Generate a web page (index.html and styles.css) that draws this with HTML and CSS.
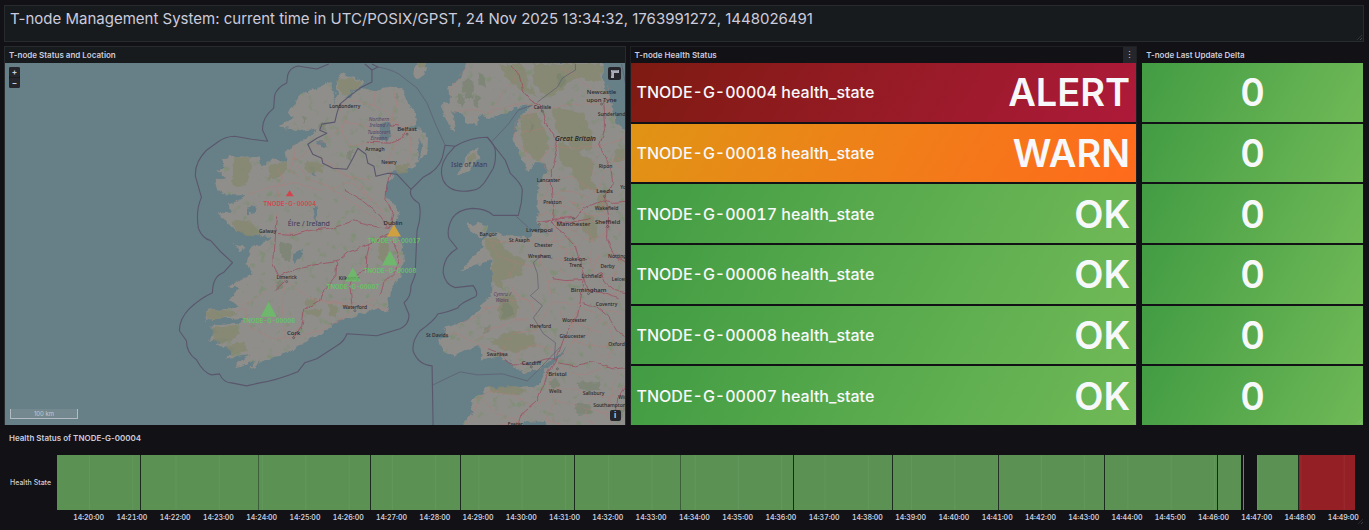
FILE: index.html
```html
<!DOCTYPE html>
<html lang="en">
<head>
    <meta charset="UTF-8">
    <meta name="viewport" content="width=device-width, initial-scale=1.0">
    <title>T-node Management System</title>
    <link rel="stylesheet" href="styles.css">
</head>
<body>
    <header class="banner resizable">
        <h1>T-node Management System: current time in UTC/POSIX/GPST, 24 Nov 2025 13:34:32, 1763991272, 1448026491</h1>
    </header>

    <main class="panels">
        <section class="panel map-panel">
            <h2 class="panel-title">T-node Status and Location</h2>
            <div class="map">
                <svg class="map-canvas" viewBox="5 63 620 361" preserveAspectRatio="xMidYMid slice" role="img" aria-label="Map of T-nodes">
                    <defs>
                        <filter id="rough" x="0" y="0" width="100%" height="100%">
                            <feTurbulence type="fractalNoise" baseFrequency="0.14" numOctaves="3" seed="4"/>
                            <feDisplacementMap in="SourceGraphic" scale="7" xChannelSelector="R" yChannelSelector="G"/>
                        </filter>
                        <!-- coast plus scattered green patches -->
                        <filter id="terrain" x="0" y="0" width="100%" height="100%" color-interpolation-filters="sRGB">
                            <feTurbulence type="fractalNoise" baseFrequency="0.14" numOctaves="3" seed="4"/>
                            <feDisplacementMap in="SourceGraphic" scale="7" xChannelSelector="R" yChannelSelector="G" result="coast"/>
                            <feTurbulence type="fractalNoise" baseFrequency="0.12" numOctaves="4" seed="21"/>
                            <feColorMatrix type="matrix" values="0 0 0 0 0.51  0 0 0 0 0.56  0 0 0 0 0.47  6 0 0 0 -3.7"/>
                            <feComposite in2="coast" operator="in" result="patches"/>
                            <feMerge>
                                <feMergeNode in="coast"/>
                                <feMergeNode in="patches"/>
                            </feMerge>
                        </filter>
                        <filter id="bend" x="0" y="0" width="100%" height="100%">
                            <feTurbulence type="fractalNoise" baseFrequency="0.1" numOctaves="2" seed="9"/>
                            <feDisplacementMap in="SourceGraphic" scale="5" xChannelSelector="R" yChannelSelector="G"/>
                        </filter>
                    </defs>

                    <!-- land -->
                    <g class="land" filter="url(#terrain)">
                        <path d="M343 73L355 78L364 84L350 93L343 98L350 97L360 88L375 90L395 87L403 92L407 103L417 115L418 122L408 129L421 128L428 138L427 153L419 160L422 147L420 138L416 150L418 162L410 168L402 170L389 172L395 178L387 181L385 193L392 203L400 214L393 225L398 233L402 247L404 260L400 277L390 290L388 302L389 312L377 307L363 313L350 317L333 322L327 330L310 338L300 345L287 353L270 358L248 369L257 360L233 367L250 353L225 358L236 348L217 345L230 337L207 339L220 330L209 325L237 323L247 317L205 320L208 310L240 307L230 298L240 287L228 286L253 273L247 263L250 250L272 237L237 231L225 220L218 213L232 212L230 203L248 195L223 195L215 180L226 178L218 170L226 168L222 158L238 156L260 157L262 168L270 160L287 162L285 153L293 145L310 137L317 128L300 131L280 127L292 118L288 112L297 103L300 95L317 88L330 82L335 93L333 104L338 94L337 85Z"/>
                        <path d="M467 62L460 78L448 88L450 103L442 102L442 112L450 128L455 130L452 112L462 113L467 123L477 127L478 115L490 118L507 113L515 107L532 105L522 113L512 138L518 153L528 172L533 163L547 163L543 177L538 183L537 210L537 223L547 234L533 230L530 237L500 234L492 231L480 242L483 247L460 270L470 267L490 260L492 277L492 290L480 308L463 322L443 327L449 337L438 338L440 346L453 357L463 350L480 345L482 360L500 355L510 363L523 372L537 370L553 357L567 345L557 360L543 372L538 385L517 387L483 387L483 393L470 400L472 412L462 424L462 430L520 430L524 420L545 421L552 430L630 430L630 134L615 123L613 110L603 82L601 62Z"/>
                        <path d="M468 224L478 222L488 225L486 233L480 237L470 230Z"/>
                        <path d="M413 73L417 62L426 62L425 75L418 79Z"/>
                        <path d="M457 176L462 167L468 153L477 147L479 157L470 170Z"/>
                        <path d="M234 243L246 248L240 251Z"/>
                    </g>

                    <!-- lakes -->
                    <g class="lake" filter="url(#rough)">
                        <path d="M381 124L390 122L392 134L388 142L380 139Z"/>
                        <path d="M316 139L325 139L327 148L321 149Z"/>
                        <path d="M311 166L315 167L315 176L311 174Z"/>
                        <path d="M314 205L318 208L319 222L315 218Z"/>
                        <path d="M293 253L303 248L302 256L295 264Z"/>
                        <path d="M248 207L257 205L253 215L248 213Z"/>
                    </g>

                    <!-- moorland and woods -->
                    <g class="moor" filter="url(#rough)">
                        <path d="M337 82L348 77L362 84L350 94L342 96Z"/>
                        <path d="M234 157L252 157L251 172L246 185L233 186L232 172Z"/>
                        <path d="M269 166L286 161L289 168L277 178L268 180Z"/>
                        <path d="M234 219L250 221L262 233L248 236L236 230Z"/>
                        <path d="M305 161L323 164L324 172L308 173Z"/>
                        <path d="M207 311L225 309L238 313L222 319L207 319Z"/>
                        <path d="M212 327L238 325L240 334L222 343L215 340Z"/>
                        <path d="M228 345L245 340L247 350L233 354Z"/>
                        <path d="M379 239L388 235L390 250L382 262L378 258Z"/>
                        <path d="M305 299L317 298L316 304L305 304Z"/>
                        <path d="M329 304L337 305L336 316L329 314Z"/>
                        <path d="M306 309L323 308L321 314L307 315Z"/>
                        <path d="M395 166L410 162L408 172L396 174Z"/>
                        <path d="M500 64L524 64L528 88L538 96L520 90L508 80Z"/>
                        <path d="M532 64L602 64L600 82L578 78L560 90L545 97L533 84Z"/>
                        <path d="M521 116L536 112L545 128L548 148L538 162L524 150L520 134Z"/>
                        <path d="M552 107L582 112L590 128L592 147L577 153L568 143L556 131Z"/>
                        <path d="M559 140L578 152L594 162L590 180L598 190L580 189L572 170L560 164Z"/>
                        <path d="M597 196L606 192L606 208L596 212Z"/>
                        <path d="M583 212L594 216L598 235L589 241L583 230Z"/>
                        <path d="M482 238L498 238L510 254L526 260L520 275L502 280L503 290L492 280L492 258Z"/>
                        <path d="M497 298L510 290L520 306L515 318L500 320Z"/>
                        <path d="M488 340L512 331L535 336L535 346L512 352L500 348Z"/>
                        <path d="M488 386L515 385L527 391L510 394L490 390Z"/>
                        <path d="M614 150L625 148L625 160L614 161Z"/>
                        <path d="M417 62L426 62L424 68L417 67Z"/>
                        <path d="M469 156L475 152L475 160L468 165Z"/>
                    </g>
                    <g class="wood" filter="url(#rough)">
                        <path d="M462 82L468 78L474 84L472 98L464 98Z"/>
                        <path d="M478 72L484 76L486 88L480 86Z"/>
                        <path d="M460 93L465 100L462 108L457 102Z"/>
                        <path d="M474 94L480 98L478 108L472 102Z"/>
                        <path d="M280 241L292 244L289 260L282 258Z"/>
                        <path d="M500 300L512 304L514 314L503 318Z"/>
                        <path d="M484 327L491 325L490 331L484 333Z"/>
                        <path d="M318 124L326 122L326 130L320 130Z"/>
                        <path d="M346 152L354 148L352 160L347 158Z"/>
                        <path d="M302 116L306 118L303 124Z"/>
                        <path d="M396 92L399 96L397 102Z"/>
                        <path d="M548 381L556 378L560 386L552 388Z"/>
                        <path d="M576 382L598 380L600 390L580 388Z"/>
                        <path d="M575 404L588 402L592 412L578 414Z"/>
                        <path d="M614 408L624 406L622 418L612 418Z"/>
                        <path d="M276 282L283 280L282 288L277 288Z"/>
                        <path d="M530 120L534 128L530 134Z"/>
                        <path d="M556 76L564 74L566 84L558 86Z"/>
                    </g>

                    <!-- minor roads -->
                    <g class="road" filter="url(#bend)">
                        <path d="M248 195L270 187L297 183L320 190L352 183L378 205L389 224"/>
                        <path d="M279 168L282 178L278 190L277 216"/>
                        <path d="M294 155L290 170L300 178M294 145L295 160L310 150L325 140L347 122L375 130L400 138"/>
                        <path d="M345 120L342 134L352 146L372 142L395 142"/>
                        <path d="M347 98L340 110L347 122M375 90L374 104L350 100M374 104L392 118L407 130"/>
                        <path d="M407 130L395 145L388 160L390 172M407 130L412 145L408 160M395 90L397 105L390 122L404 128L416 120"/>
                        <path d="M297 165L310 180L330 186L350 200L372 215L389 228"/>
                        <path d="M277 235L292 233L310 231M328 165L345 175L370 180M320 158L332 165L360 183L372 203"/>
                        <path d="M285 280L282 300L285 335L292 337M240 307L252 300L270 287L285 280L310 297L325 300L370 305L389 311"/>
                        <path d="M248 324L262 333L276 338L294 337L320 330L345 316L355 308L375 297"/>
                        <path d="M295 336L300 325M318 300L340 303L355 308M236 310L248 309L244 320"/>
                        <path d="M392 225L398 245L401 262L396 275L383 285M372 245L366 265L350 272"/>
                        <path d="M467 66L455 82L450 95M453 112L470 110L490 112L515 104L538 105M490 112L500 98L518 72"/>
                        <path d="M538 105L515 122L514 138L525 150L530 158M542 108L525 118M549 126L535 130L520 132M542 108L570 105L600 104"/>
                        <path d="M600 104L610 112L606 84M600 104L590 88L575 76L560 68M551 146L540 160L550 172M551 146L575 148L600 145M600 145L620 140L625 138"/>
                        <path d="M610 155L620 160L625 158M605 165L612 160L622 168M604 170L600 185L590 195"/>
                        <path d="M545 180L570 175L585 186L603 195M550 196L562 190L575 192L590 198M553 208L560 196L572 202L585 205"/>
                        <path d="M537 200L550 205L562 198M538 215L548 212L556 218L570 216L585 222L605 222"/>
                        <path d="M545 232L560 226L575 230L590 222M533 236L548 242L560 240L575 234L590 240L607 230"/>
                        <path d="M600 196L604 210L612 224L622 232M604 198L618 204L625 200M608 226L600 240L610 252L606 268"/>
                        <path d="M490 240L510 242L530 240L540 248L540 262L548 280L552 300L540 322L535 330"/>
                        <path d="M488 242L500 256L515 262L530 265L540 262M515 262L508 278L515 294L528 300L540 322"/>
                        <path d="M492 290L505 300L520 298L538 302M482 308L498 306L505 300M462 322L480 315L492 304M444 334L460 335L475 342L488 348"/>
                        <path d="M475 342L485 330L500 325L515 320L528 318M500 358L505 342L515 332L535 330M515 362L520 348L538 344L555 350"/>
                        <path d="M562 345L570 330L575 318L577 300M552 300L565 303L580 302M548 280L565 282L585 278"/>
                        <path d="M555 258L570 262L580 268M560 244L572 256L590 258L606 268M585 222L592 240L590 258L594 275"/>
                        <path d="M600 255L592 270L602 285L615 290M615 250L620 262L612 275L622 285M580 292L590 288L606 296L620 294"/>
                        <path d="M580 305L572 320L575 340M582 306L600 315L610 330L615 345L606 360M600 318L585 335L575 340"/>
                        <path d="M575 340L560 358M575 340L595 346L612 345L625 340M557 364L575 375L590 372L605 366L617 368"/>
                        <path d="M557 364L548 385L555 400L545 418M555 386L575 388L593 396L610 396L625 384M593 396L585 412L592 424"/>
                        <path d="M555 400L575 404L593 410L612 412L625 406M518 420L530 405L546 398L555 386M518 420L495 412L478 396L490 390L515 395L530 405"/>
                        <path d="M518 420L498 424M478 396L475 410L466 422M545 418L562 424M617 368L614 384L610 396M610 396L606 412L612 424"/>
                        <path d="M595 175L588 165L600 152M570 200L582 212L594 216L606 212M560 216L552 232L545 240"/>
                        <path d="M540 200L548 190L545 180M560 205L575 210L584 200M543 226L556 232L552 244L566 250L580 244M566 250L560 270L572 276"/>
                        <path d="M594 276L606 278L618 272M600 300L606 310L620 312M560 310L566 322L585 326L600 332M590 340L598 356L612 352"/>
                    </g>

                    <!-- motorways -->
                    <g class="motorway" filter="url(#bend)">
                        <path d="M277 216L275 232L273 262L280 276L303 266L337 261L348 252L370 243L390 234"/>
                        <path d="M278 234L295 235L310 230L335 227L353 220L375 226L389 228"/>
                        <path d="M286 281L276 290M337 261L336 275L322 292L320 300L305 309L302 325L294 337"/>
                        <path d="M370 243L367 255L366 270L352 276L350 285L352 305"/>
                        <path d="M389 228L393 213L386 200L387 185L390 172M389 228L380 215L362 200L345 190"/>
                        <path d="M392 240L399 255L396 270L384 282L380 296"/>
                        <path d="M368 142L390 143L402 138L407 130M388 124L398 126"/>
                        <path d="M510 64L519 75L522 90L530 100L540 106L545 122L553 135L557 150L551 170L551 190L553 206L552 224L562 232L575 246L580 262L584 277L580 300L577 315L565 333L557 356L545 376L538 398L522 412L517 424"/>
                        <path d="M603 100L605 125L599 145L610 166L612 182L605 196L608 215L607 238L613 255L625 262"/>
                        <path d="M545 222L560 218L575 217L583 208L602 200L612 203L625 202"/>
                        <path d="M538 222L550 220L570 222L590 218M552 278L565 280L582 279M584 277L588 290L600 292L618 298M582 302L596 306L608 316L616 330L625 336"/>
                        <path d="M488 348L500 352L508 363L530 363L547 358L557 358M557 362L575 365L592 361L612 368L625 367"/>
                        <path d="M625 385L616 398L615 410M594 276L600 272L605 282L615 290L625 292"/>
                    </g>

                    <!-- borders -->
                    <g class="border">
                        <path d="M329 64L317 69L298 66Q290 68 288 75L287 83Q278 87 275 95L274 108Q262 118 263 130L268 141L252 139L235 136Q226 136 218 142L207 150Q195 162 196 176L202 197Q196 210 199 228Q203 238 211 240L222 252L233 262L224 272Q213 276 213 292Q200 298 190 308Q180 318 180 330L187 340Q187 352 197 359Q204 372 212 374L220 373Q224 382 232 382L247 385L260 382Q276 380 298 371L305 362L317 358L337 345Q345 340 347 333L377 335L400 328Q409 324 409 314L404 302Q411 297 411 285L415 275L417 230Q422 215 419 203Q408 196 411 189L423 177Q438 170 442 158L445 145"/>
                        <path d="M445 145L455 146Q470 137 487 137Q494 144 495 150Q496 160 493 168L487 178Q480 190 472 190Q450 194 443 180Q438 168 447 155L455 146"/>
                        <path d="M487 137L505 160L510 173Q522 184 522 190L521 202L518 215L493 215Q486 208 472 208Q458 209 452 218Q446 230 449 238L457 248Q443 256 443 272Q445 284 455 287L473 285Q480 295 473 297Q458 304 458 307Q446 312 438 313Q434 320 420 330Q412 340 413 350Q418 364 432 365L433 424"/>
                        <path d="M365 64L372 70L378 67L372 64M372 70L372 82L360 88L346 99L340 104Q337 112 335 122L322 124L320 130L327 133L317 138L308 144L313 154L322 158L323 163L333 168L347 169L353 158L358 148L366 154L368 163L374 166L376 176L388 173L397 174L411 189"/>
                    </g>
                    <g class="border border-thin">
                        <path d="M378 67Q396 70 404 78L417 88L427 103L435 123L445 145M492 141L508 124L518 110L532 105M537 102L557 87L562 78L575 70L575 64"/>
                        <path d="M433 384L460 371L477 374L502 373L527 380L537 370L560 346M516 216L528 227M621 64L625 84"/>
                        <path d="M552 258L541 255L533 262L537 273L538 288L530 295L542 305L533 317L543 333L555 342L554 358"/>
                    </g>

                    <!-- place names -->
                    <g class="place">
                        <text x="345" y="108">Londonderry</text>
                        <text x="375" y="151">Armagh</text>
                        <text x="389" y="164">Newry</text>
                        <text x="268" y="233">Galway</text>
                        <text x="287" y="278">Limerick</text>
                        <text x="349" y="279">Kilkenny</text>
                        <text x="355" y="308">Waterford</text>
                        <text x="542" y="109">Carlisle</text>
                        <text x="611" y="116">Sunderland</text>
                        <text x="605" y="168">Ripon</text>
                        <text x="548" y="182">Lancaster</text>
                        <text x="552" y="204">Preston</text>
                        <text x="606" y="210">Wakefield</text>
                        <text x="625" y="189">York</text>
                        <text x="488" y="236">Bangor</text>
                        <text x="519" y="242">St Asaph</text>
                        <text x="543" y="247">Chester</text>
                        <text x="539" y="257">Wrexham</text>
                        <text x="575" y="260">Stoke-on-</text>
                        <text x="575" y="266">Trent</text>
                        <text x="607" y="267">Derby</text>
                        <text x="622" y="257">Nottingham</text>
                        <text x="591" y="277">Lichfield</text>
                        <text x="622" y="280">Leicester</text>
                        <text x="606" y="305">Coventry</text>
                        <text x="574" y="321">Worcester</text>
                        <text x="540" y="327">Hereford</text>
                        <text x="572" y="337">Gloucester</text>
                        <text x="616" y="345">Oxford</text>
                        <text x="437" y="336">St Davids</text>
                        <text x="497" y="355">Swansea</text>
                        <text x="555" y="392">Wells</text>
                        <text x="593" y="394">Salisbury</text>
                        <text x="625" y="398">Winch</text>
                        <text x="609" y="406">Southampton</text>
                        <text x="515" y="425">Exeter</text>
                    </g>
                    <g class="place city">
                        <text x="407" y="131">Belfast</text>
                        <text x="393" y="225">Dublin</text>
                        <text x="294" y="334">Cork</text>
                        <text x="601" y="94">Newcastle</text>
                        <text x="601" y="102">upon Tyne</text>
                        <text x="604" y="193">Leeds</text>
                        <text x="573" y="226">Manchester</text>
                        <text x="607" y="224">Sheffield</text>
                        <text x="539" y="232">Liverpool</text>
                        <text x="588" y="291">Birmingham</text>
                        <text x="531" y="364">Cardiff</text>
                        <text x="557" y="375">Bristol</text>
                    </g>
                    <g class="dot">
                        <circle cx="407" cy="134" r="1"/>
                        <circle cx="294" cy="337" r="1"/>
                        <circle cx="287" cy="281" r="1"/>
                        <circle cx="601" cy="104" r="1"/>
                        <circle cx="542" cy="111" r="1"/>
                        <circle cx="604" cy="196" r="1"/>
                        <circle cx="573" cy="218" r="1"/>
                        <circle cx="539" cy="224" r="1"/>
                        <circle cx="588" cy="293" r="1"/>
                        <circle cx="531" cy="366" r="1"/>
                        <circle cx="557" cy="368" r="1"/>
                        <circle cx="607" cy="226" r="1"/>
                        <circle cx="355" cy="310" r="1"/>
                    </g>
                    <g class="region">
                        <text x="379" y="121">Northern</text>
                        <text x="379" y="127">Ireland /</text>
                        <text x="379" y="134">Tuaisceart</text>
                        <text x="379" y="140">Éireann</text>
                        <text x="502" y="295">Cymru /</text>
                        <text x="502" y="301">Wales</text>
                    </g>
                    <text class="country" x="309" y="226">Éire / Ireland</text>
                    <text class="country" x="469" y="167">Isle of Man</text>
                    <text class="country island" x="575" y="141">Great Britain</text>

                    <!-- nodes -->
                    <g class="node node-ok">
                        <path d="M269 301L277 316H261Z"/>
                        <text x="269" y="322">TNODE-G-00006</text>
                        <path d="M353 267L361 281H345Z"/>
                        <text x="353" y="288">TNODE-G-00007</text>
                        <path d="M390 250L398 265H382Z"/>
                        <text x="390" y="272">TNODE-G-00008</text>
                        <text x="394" y="243">TNODE-G-00017</text>
                    </g>
                    <g class="node node-warn">
                        <path d="M394 224L401 236H387Z"/>
                    </g>
                    <g class="node node-alert">
                        <path d="M290 190L294 196H286Z"/>
                        <text x="290" y="206">TNODE-G-00004</text>
                    </g>
                </svg>

                <div class="zoom-controls">
                    <button type="button" aria-label="Zoom in">+</button>
                    <button type="button" aria-label="Zoom out">–</button>
                </div>
                <button type="button" class="map-btn measure-btn" aria-label="Measure">
                    <svg viewBox="0 0 13 13" width="13" height="13"><path d="M3 3h8v3H6v5H3z" fill="#a9abb8"/><path d="M5 3v1M7 3v1M9 3v1M3 6h1M3 8h1" stroke="#22252b" stroke-width="0.5"/></svg>
                </button>
                <button type="button" class="map-btn info-btn" aria-label="Attributions">i</button>
                <div class="scale-line">100 km</div>
            </div>
        </section>

        <section class="panel resizable">
            <div class="panel-head">
                <h2 class="panel-title">T-node Health Status</h2>
                <button type="button" class="menu-btn" aria-label="Menu">⋮</button>
            </div>
            <div class="stats">
                <div class="stat alert"><span>TNODE-G-00004 health_state</span><strong>ALERT</strong></div>
                <div class="stat warn"><span>TNODE-G-00018 health_state</span><strong>WARN</strong></div>
                <div class="stat ok"><span>TNODE-G-00017 health_state</span><strong>OK</strong></div>
                <div class="stat ok"><span>TNODE-G-00006 health_state</span><strong>OK</strong></div>
                <div class="stat ok"><span>TNODE-G-00008 health_state</span><strong>OK</strong></div>
                <div class="stat ok"><span>TNODE-G-00007 health_state</span><strong>OK</strong></div>
            </div>
        </section>

        <section class="panel plain resizable">
            <h2 class="panel-title">T-node Last Update Delta</h2>
            <div class="stats">
                <div class="stat ok delta"><strong>0</strong></div>
                <div class="stat ok delta"><strong>0</strong></div>
                <div class="stat ok delta"><strong>0</strong></div>
                <div class="stat ok delta"><strong>0</strong></div>
                <div class="stat ok delta"><strong>0</strong></div>
                <div class="stat ok delta"><strong>0</strong></div>
            </div>
        </section>
    </main>

    <section class="timeline resizable">
        <h2 class="panel-title">Health Status of TNODE-G-00004</h2>
        <div class="timeline-body">
            <div class="series-name">Health State</div>
            <div class="bars">
                <span class="seg" style="flex-grow: 84"></span>
                <span class="seg soft" style="flex-grow: 118"></span>
                <span class="seg" style="flex-grow: 112"></span>
                <span class="seg" style="flex-grow: 90"></span>
                <span class="seg" style="flex-grow: 114"></span>
                <span class="seg soft" style="flex-grow: 106"></span>
                <span class="seg" style="flex-grow: 114"></span>
                <span class="seg" style="flex-grow: 99"></span>
                <span class="seg" style="flex-grow: 106"></span>
                <span class="seg" style="flex-grow: 106"></span>
                <span class="seg" style="flex-grow: 113"></span>
                <span class="seg last" style="flex-grow: 23"></span>
                <span class="seg none" style="flex-grow: 2"></span>
                <span class="seg last" style="flex-grow: 1"></span>
                <span class="seg none" style="flex-grow: 13"></span>
                <span class="seg" style="flex-grow: 42"></span>
                <span class="seg bad" style="flex-grow: 56"></span>
            </div>
            <div class="axis">
                <span>14:20:00</span><span>14:21:00</span><span>14:22:00</span><span>14:23:00</span><span>14:24:00</span>
                <span>14:25:00</span><span>14:26:00</span><span>14:27:00</span><span>14:28:00</span><span>14:29:00</span>
                <span>14:30:00</span><span>14:31:00</span><span>14:32:00</span><span>14:33:00</span><span>14:34:00</span>
                <span>14:35:00</span><span>14:36:00</span><span>14:37:00</span><span>14:38:00</span><span>14:39:00</span>
                <span>14:40:00</span><span>14:41:00</span><span>14:42:00</span><span>14:43:00</span><span>14:44:00</span>
                <span>14:45:00</span><span>14:46:00</span><span>14:47:00</span><span>14:48:00</span><span>14:49:00</span>
            </div>
        </div>
    </section>
</body>
</html>
```

FILE: styles.css
```css
* {
    box-sizing: border-box;
}
body {
    margin: 0;
    padding: 5px 5px 5px 4px;
    min-height: 100vh;
    display: flex;
    flex-direction: column;
    gap: 4px;
    background: #111116;
    color: #ccccdc;
    font-family: Inter, 'Liberation Sans', sans-serif;
}
h1, h2 {
    margin: 0;
}
button {
    font-family: inherit;
    padding: 0;
    border: none;
    color: #ccccdc;
    cursor: pointer;
}
.banner {
    background: #181b1e;
    border: 1px solid #272b2e;
    height: 37px;
    padding: 3px 5px;
}
.banner h1 {
    font-size: 15px;
    line-height: 20px;
    font-weight: 400;
}
.panels {
    flex: 1;
    display: grid;
    grid-template-columns: 622fr 508fr 223fr;
    gap: 4px;
}
.panel {
    display: flex;
    flex-direction: column;
    border: 1px solid #1f2023;
    border-bottom: none;
}
.panel.plain {
    border-color: transparent;
}
.map-panel {
    background: #181b1e;
    border-color: #272b2e;
}
.panel-title {
    font-size: 8px;
    line-height: 16px;
    font-weight: 600;
    padding-left: 4px;
}
.panel-head {
    display: flex;
    justify-content: space-between;
}
.menu-btn {
    width: 13px;
    background: #25262b;
    font-size: 9px;
    line-height: 16px;
}

/* drag corner */
.resizable {
    position: relative;
}
.resizable::after {
    content: "";
    position: absolute;
    right: 1px;
    bottom: 1px;
    width: 5px;
    height: 5px;
    background: repeating-linear-gradient(135deg, transparent 0 1px, rgba(204, 204, 220, 0.25) 1px 2px);
    clip-path: polygon(100% 0, 100% 100%, 0 100%);
}

/* map */
.map {
    position: relative;
    flex: 1;
    min-height: 361px;
    background: #677f87;
}
.map-canvas {
    position: absolute;
    width: 100%;
    height: 100%;
}
.land {
    fill: #8f8e8b;
}
.lake {
    fill: #677f87;
}
.moor {
    fill: #868971;
    opacity: 0.85;
}
.wood {
    fill: #74826d;
    opacity: 0.6;
}
.road {
    fill: none;
    stroke: #b47b78;
    stroke-width: 0.6;
    opacity: 0.8;
}
.motorway {
    fill: none;
    stroke: #9c4c60;
    stroke-width: 0.9;
    opacity: 0.85;
}
.border {
    fill: none;
    stroke: #5a576c;
    stroke-width: 1.1;
    stroke-linejoin: round;
}
.border-thin {
    stroke-width: 0.6;
}
.place, .region, .country {
    font-family: 'Noto Sans', sans-serif;
    text-anchor: middle;
}
.place {
    font-size: 5px;
    font-weight: 500;
    fill: #29292b;
}
.city {
    font-size: 6px;
}
.dot {
    fill: none;
    stroke: #444;
    stroke-width: 0.5;
}
.region {
    font-size: 5px;
    font-style: italic;
    fill: #54436a;
}
.country {
    font-size: 7px;
    fill: #40375a;
}
.island {
    font-style: italic;
    font-weight: 500;
    fill: #1c1c1c;
}
.node {
    font-size: 6px;
    font-weight: 600;
    font-variant-numeric: tabular-nums;
    text-anchor: middle;
}
.node-ok {
    fill: #66c464;
}
.node-ok path {
    opacity: 0.75;
}
.node-warn {
    fill: #cfa040;
}
.node-alert {
    fill: #d3454d;
}
.zoom-controls {
    position: absolute;
    top: 4px;
    left: 4px;
    display: flex;
    flex-direction: column;
    background: #1b1c20;
    border-radius: 2px;
    gap: 1px;
}
.zoom-controls button {
    width: 11px;
    height: 10px;
    background: #25262c;
    border-radius: 2px;
    font-size: 8px;
    line-height: 10px;
    font-weight: 700;
}
.map-btn {
    position: absolute;
    right: 4px;
    background: #25262c;
    border-radius: 2px;
}
.measure-btn {
    top: 4px;
    width: 13px;
    height: 13px;
}
.measure-btn svg {
    display: block;
}
.info-btn {
    bottom: 4px;
    width: 11px;
    height: 11px;
    font-size: 8px;
    line-height: 11px;
    font-weight: 700;
}
.scale-line {
    position: absolute;
    left: 5px;
    bottom: 6px;
    width: 68px;
    height: 10px;
    border: 1px solid #b4bac4;
    border-top: none;
    background: #748890;
    font-size: 6px;
    line-height: 9px;
    text-align: center;
    color: #c2c8d2;
}

/* stats */
.stats {
    flex: 1;
    display: grid;
    grid-auto-rows: 1fr;
    gap: 2px;
}
.stat {
    display: flex;
    align-items: center;
    justify-content: space-between;
    padding: 0 6px;
    color: #f7f8fa;
    font-size: 16px;
    font-weight: 500;
    font-variant-numeric: tabular-nums;
}
.stat strong {
    font-size: 38px;
    line-height: 48px;
    font-weight: 600;
}
.delta {
    justify-content: center;
}
.ok {
    background: linear-gradient(120deg, #429c43, #70b957);
}
.warn {
    background: linear-gradient(120deg, #e09415, #ff6a1c);
}
.alert {
    background: linear-gradient(120deg, #7e1b11, #ae1a3a);
}

/* timeline */
.timeline {
    padding: 1px 9px 0 1px;
}
.timeline-body {
    display: grid;
    grid-template-columns: 52px 1fr;
    margin-top: 9px;
}
.series-name {
    font-size: 7px;
    line-height: 55px;
    font-weight: 500;
    padding-left: 5px;
}
.bars {
    position: relative;
    display: flex;
    height: 55px;
}
/* minute grid */
.bars::after {
    content: "";
    position: absolute;
    inset: 0;
    background: linear-gradient(to right, rgba(255, 255, 255, 0.05) 1px, transparent 1px) 32px 0;
    background-size: calc(100% / 30) 100%;
}
.seg {
    flex-basis: 0;
    background: #5b9153;
    box-shadow: inset -1px 0 #1c2a1e;
}
.soft {
    box-shadow: inset -1px 0 #3a5f3a;
}
.last {
    box-shadow: none;
}
.none {
    background: none;
    box-shadow: none;
}
.bad {
    background: #942025;
    box-shadow: none;
}
.axis {
    grid-column: 2;
    display: flex;
    margin: 0 -10px 0 10px;
}
.axis span {
    flex: 1;
    font-size: 7px;
    line-height: 15px;
    font-weight: 600;
    font-variant-numeric: tabular-nums;
    text-align: center;
}
```
